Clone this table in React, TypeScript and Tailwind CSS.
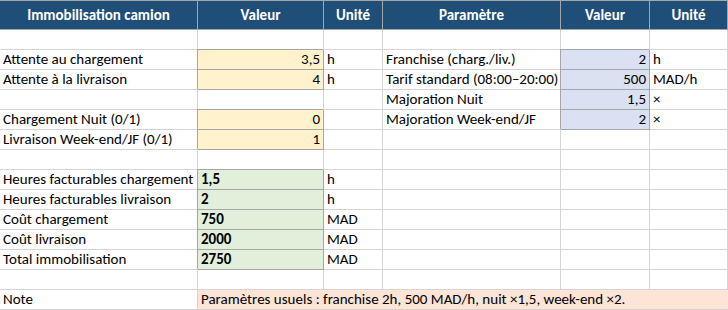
import React from "react";

type Fill = "none" | "orange" | "blue" | "green";

type C = {
  t?: string;
  fill?: Fill;
  align?: "l" | "r";
  bold?: boolean;
};

const fillCls: Record<Fill, string> = {
  none: "bg-white",
  orange: "bg-[#FFF2CC] shadow-[-1px_-1px_0_0_#A6A6A6] border-r-[#A6A6A6] border-b-[#A6A6A6]",
  blue: "bg-[#D9E1F2] shadow-[-1px_-1px_0_0_#A6A6A6] border-r-[#A6A6A6] border-b-[#A6A6A6]",
  green: "bg-[#E2EFDA] shadow-[-1px_-1px_0_0_#A6A6A6] border-r-[#A6A6A6] border-b-[#A6A6A6]",
};

function Cell({ c }: { c: C }) {
  const fill = c.fill ?? "none";
  return (
    <div
      className={
        "h-[20px] border-r border-b border-[#D4D4D4] px-[3px] leading-[19px] whitespace-nowrap overflow-visible " +
        fillCls[fill] +
        (c.align === "r" ? " text-right" : " text-left") +
        (c.bold ? " font-bold" : "")
      }
    >
      {c.t ?? ""}
    </div>
  );
}

const E: C = {};

const rows: C[][] = [
  [E, E, E, E, E, E],
  [
    { t: "Attente au chargement" },
    { t: "3,5", fill: "orange", align: "r" },
    { t: "h" },
    { t: "Franchise (charg./liv.)" },
    { t: "2", fill: "blue", align: "r" },
    { t: "h" },
  ],
  [
    { t: "Attente à la livraison" },
    { t: "4", fill: "orange", align: "r" },
    { t: "h" },
    { t: "Tarif standard (08:00–20:00)" },
    { t: "500", fill: "blue", align: "r" },
    { t: "MAD/h" },
  ],
  [E, E, E, { t: "Majoration Nuit" }, { t: "1,5", fill: "blue", align: "r" }, { t: "×" }],
  [
    { t: "Chargement Nuit (0/1)" },
    { t: "0", fill: "orange", align: "r" },
    E,
    { t: "Majoration Week-end/JF" },
    { t: "2", fill: "blue", align: "r" },
    { t: "×" },
  ],
  [{ t: "Livraison Week-end/JF (0/1)" }, { t: "1", fill: "orange", align: "r" }, E, E, E, E],
  [E, E, E, E, E, E],
  [{ t: "Heures facturables chargement" }, { t: "1,5", fill: "green", bold: true }, { t: "h" }, E, E, E],
  [{ t: "Heures facturables livraison" }, { t: "2", fill: "green", bold: true }, { t: "h" }, E, E, E],
  [{ t: "Coût chargement" }, { t: "750", fill: "green", bold: true }, { t: "MAD" }, E, E, E],
  [{ t: "Coût livraison" }, { t: "2000", fill: "green", bold: true }, { t: "MAD" }, E, E, E],
  [{ t: "Total immobilisation" }, { t: "2750", fill: "green", bold: true }, { t: "MAD" }, E, E, E],
  [E, E, E, E, E, E],
];

const headers = ["Immobilisation camion", "Valeur", "Unité", "Paramètre", "Valeur", "Unité"];

export default function App() {
  return (
    <div
      className="w-[728px] h-[310px] bg-white text-black text-[15px] overflow-hidden"
      style={{ fontFamily: "Carlito, Calibri, Lato, 'Liberation Sans', sans-serif" }}
    >
      <div className="grid grid-cols-[198px_126px_59px_178px_89px_78px]">
        {headers.map((h, i) => (
          <div
            key={i}
            className="h-[30px] bg-[#1F4E78] text-white font-bold text-[15px] text-center leading-[28px] border-t border-b border-r border-[#A6A6A6]"
          >
            {h}
          </div>
        ))}
        {rows.map((r, ri) => r.map((c, ci) => <Cell key={ri + "-" + ci} c={c} />))}
        <Cell c={{ t: "Note" }} />
        <div className="col-span-5 h-[20px] bg-[#FCE4D6] border-b border-[#D4D4D4] px-[3px] leading-[19px] whitespace-nowrap">
          Paramètres usuels : franchise 2h, 500 MAD/h, nuit ×1,5, week-end ×2.
        </div>
      </div>
    </div>
  );
}
